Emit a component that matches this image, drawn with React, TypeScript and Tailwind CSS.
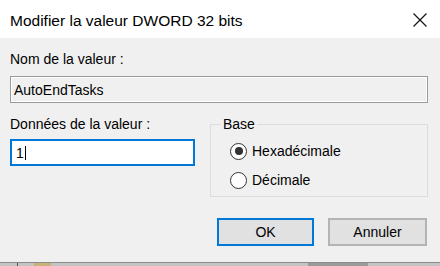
function Radio({ label, checked }: { label: string; checked?: boolean }) {
  return (
    <label className="flex items-center h-[20px]">
      <span className="flex items-center justify-center w-[17px] h-[17px] rounded-full border-[1.5px] border-[#333333] bg-white">
        {checked && <span className="w-[8px] h-[8px] rounded-full bg-[#333333]" />}
      </span>
      <span className="ml-[5px]">{label}</span>
    </label>
  )
}

export default function App() {
  return (
    <div className="w-[440px] h-[266px] flex flex-col bg-[#f0f0f0] text-black text-[14px] leading-[16px] font-['Liberation_Sans',Arial,sans-serif]">
      <div className="h-[38px] shrink-0 bg-white flex items-center justify-between pl-[10px] pr-[13px] pt-[3px]">
        <span className="text-[15.5px]">Modifier la valeur DWORD 32 bits</span>
        {/* close glyph */}
        <svg width="14" height="14" viewBox="0 0 14 14" className="mb-[1px]">
          <path d="M0.5 0.5 L13.5 13.5 M13.5 0.5 L0.5 13.5" stroke="#111111" strokeWidth="1.2" fill="none" />
        </svg>
      </div>

      <div className="flex-1 flex flex-col pl-[10px] pr-[12px]">
        <div className="mt-[13px]">Nom de la valeur :</div>
        <div className="mt-[9px] h-[27px] flex items-center pl-[3px] border border-[#9a9a9a] shadow-[inset_0_0_0_1px_#ffffff] bg-[#f0f0f0]">
          AutoEndTasks
        </div>

        <div className="mt-[13px] flex items-start">
          <div className="w-[185px] flex flex-col">
            <div>Données de la valeur :</div>
            <div className="mt-[7px] h-[27px] flex items-center pl-[4px] bg-white border-2 border-[#0078d7]">
              <span>1</span>
              <span className="ml-[1px] w-px h-[14px] bg-black" />
            </div>
          </div>

          <fieldset className="ml-[15px] flex-1 border border-[#dcdcdc] px-0 pb-[6px]">
            <legend className="ml-[10px] px-[2px] leading-[16px]">Base</legend>
            <div className="flex flex-col gap-[9px] pl-[19px] pt-[9px]">
              <Radio label="Hexadécimale" checked />
              <Radio label="Décimale" />
            </div>
          </fieldset>
        </div>

        <div className="mt-[21px] flex justify-end gap-[14px] pr-[1px]">
          <button className="w-[97px] h-[28px] bg-[#e1e1e1] border-2 border-[#0078d7]">OK</button>
          <button className="w-[99px] h-[28px] bg-[#e1e1e1] border-2 border-[#b4b4b4]">Annuler</button>
        </div>
      </div>

      <div className="h-[4px] shrink-0 border-t border-[#8c8c8c] bg-[#c4c4c4] flex">
        <span className="ml-[17px] w-px bg-[#555555]" />
        <span className="ml-[16px] w-[17px] bg-[#c9b27a]" />
        <span className="ml-[257px] w-[60px] bg-[#9a9a9a]" />
      </div>
    </div>
  )
}
